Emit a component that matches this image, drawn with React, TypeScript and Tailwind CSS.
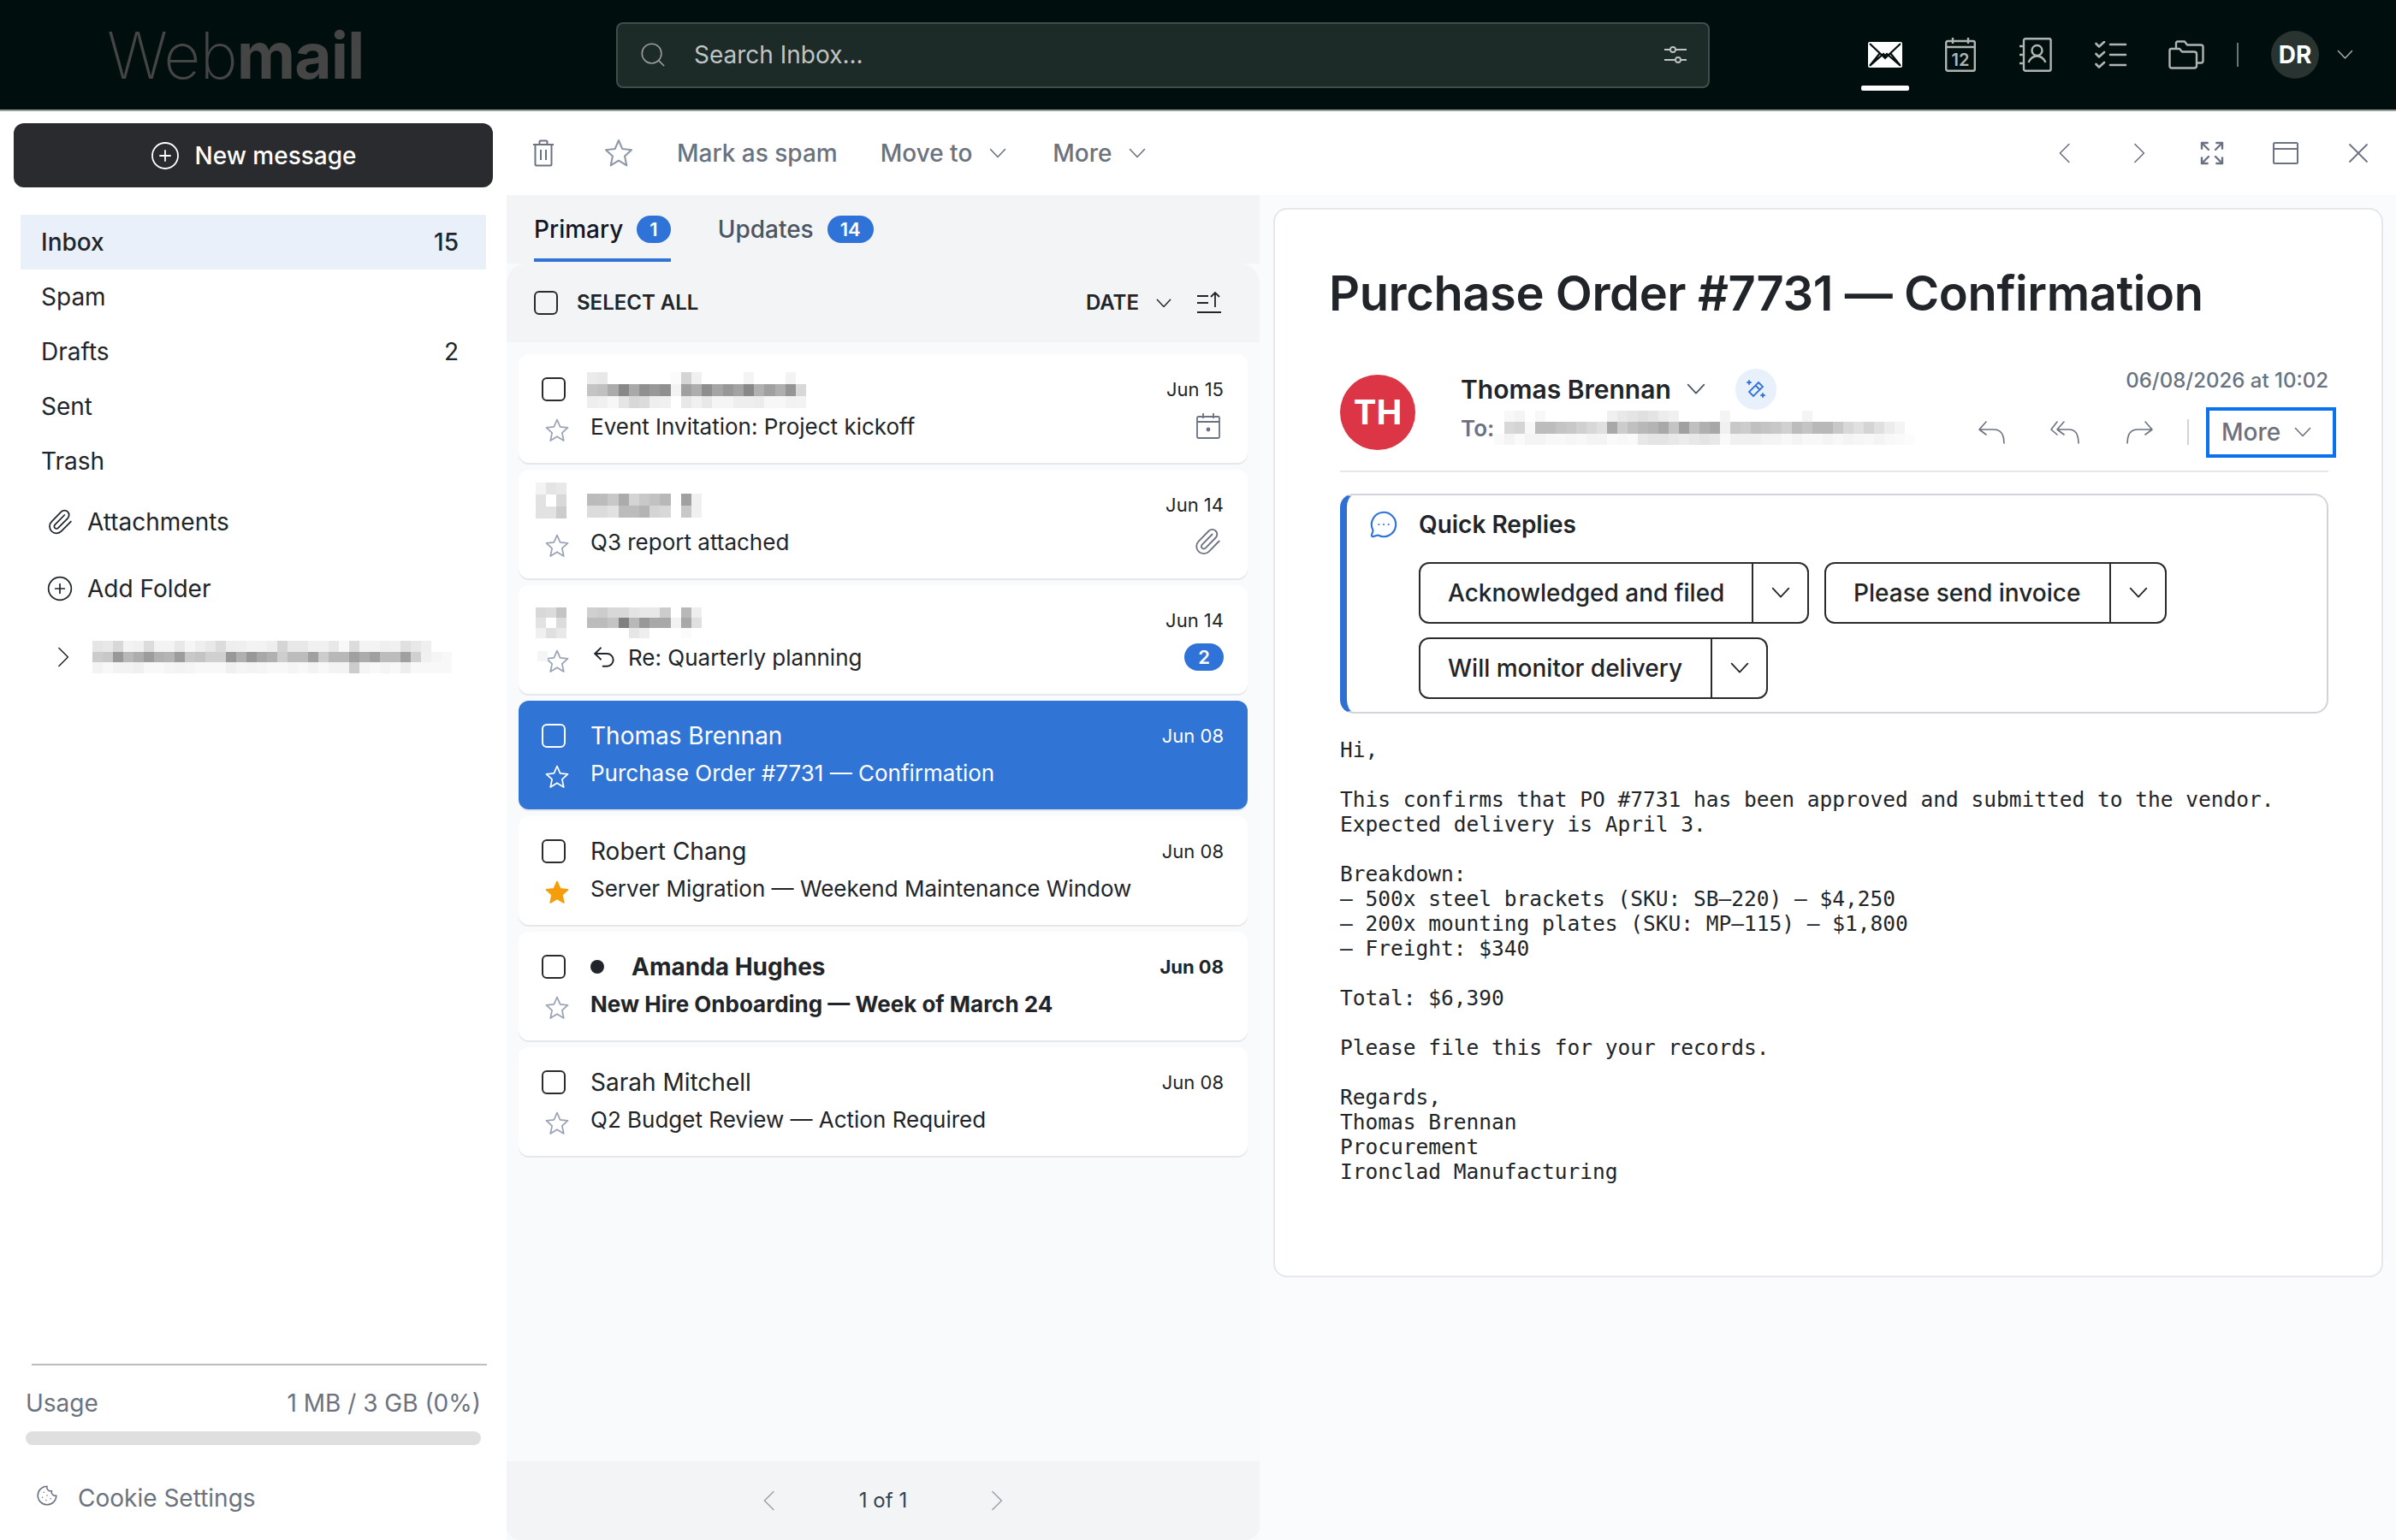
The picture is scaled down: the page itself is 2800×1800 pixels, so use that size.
import React from "react";
import { CirclePlus, Cookie, Expand, MessageCircleMore, Paperclip, Search, Undo2 } from "lucide-react";

// thin chevron used all over the page
function Chev({ dir = "down", w = 20, color = "#6b7280", sw = 1.6 }: { dir?: string; w?: number; color?: string; sw?: number }) {
  const d: Record<string, string> = {
    down: "M1.5 1.5 L10 10.5 L18.5 1.5",
    up: "M1.5 10.5 L10 1.5 L18.5 10.5",
  };
  if (dir === "left" || dir === "right") {
    return (
      <svg width={w * 0.7} height={w} viewBox="0 0 14 24" fill="none" stroke={color} strokeWidth={sw} strokeLinecap="round" strokeLinejoin="round">
        <path d={dir === "left" ? "M12.5 1.5 L2 12 L12.5 22.5" : "M1.5 1.5 L12 12 L1.5 22.5"} />
      </svg>
    );
  }
  return (
    <svg width={w} height={w * 0.6} viewBox="0 0 20 12" fill="none" stroke={color} strokeWidth={sw} strokeLinecap="round" strokeLinejoin="round">
      <path d={d[dir]} />
    </svg>
  );
}

function StarIcon({ color = "#9aa3b5", fill = "none", size = 30 }: { color?: string; fill?: string; size?: number }) {
  return (
    <svg width={size} height={size} viewBox="0 0 24 24" fill={fill} stroke={color} strokeWidth="1.4" strokeLinejoin="round">
      <path d="M12 2 L14.9 8.7 L22 9.5 L16.7 14.3 L18.2 21.6 L12 17.8 L5.8 21.6 L7.3 14.3 L2 9.5 L9.1 8.7 Z" />
    </svg>
  );
}

function Trash() {
  return (
    <svg width="28" height="32" viewBox="0 0 28 32" fill="none" stroke="#6b7280" strokeWidth="2">
      <path d="M2 6 H26 M9.5 6 V2.5 Q9.5 1.5 10.5 1.5 H17.5 Q18.5 1.5 18.5 2.5 V6" />
      <path d="M4.5 6 V29 Q4.5 30.5 6 30.5 H22 Q23.5 30.5 23.5 29 V6" />
      <path d="M11 12 V24 M17 12 V24" />
    </svg>
  );
}

function Checkbox({ color = "#2b2b2d" }: { color?: string }) {
  return <div className="w-[28px] h-[28px] rounded-[6px] border-2 shrink-0" style={{ borderColor: color }} />;
}

// pixelated blocks that stand for the redacted names
function Mosaic({ rows, cw = 12.2, ch = 14 }: { rows: string[]; cw?: number; ch?: number }) {
  const parsed = rows.map((r) => r.split(" "));
  const cols = Math.max(...parsed.map((r) => r.length));
  return (
    <svg width={cols * cw} height={parsed.length * ch} shapeRendering="crispEdges" className="shrink-0">
      {parsed.map((r, y) =>
        r.map((c, x) => <rect key={x + "-" + y} x={x * cw} y={y * ch} width={cw + 0.5} height={ch} fill={"#" + c + c + c} />)
      )}
    </svg>
  );
}

const navItems = [
  { label: "Inbox", count: "15", active: true },
  { label: "Spam" },
  { label: "Drafts", count: "2" },
  { label: "Sent" },
  { label: "Trash" },
];

function Header() {
  return (
    <header className="h-[130px] shrink-0 bg-[#000f0d] border-b-2 border-[#9a9e9b] flex items-center">
      <div className="w-[720px] pl-[125px] shrink-0 text-[#454545] text-[75px] leading-none tracking-[-1px] font-extralight">
        Web<span className="font-bold">mail</span>
      </div>
      <div className="w-[1278px] h-[77px] shrink-0 rounded-[8px] bg-[#1c2a28] border-2 border-[#3f4d4b] flex items-center pl-[24px] pr-[24px]">
        <Search size={34} strokeWidth={1.1} color="#9a9f9d" className="shrink-0" />
        <span className="ml-[31px] text-[28px] text-[#c0c4c2]">Search Inbox...</span>
        <svg width="28" height="24" viewBox="0 0 28 24" fill="none" stroke="#c0c4c2" strokeWidth="1.8" className="ml-auto">
          <path d="M1 6 H8 M14 6 H27 M1 18 H14 M20 18 H27" />
          <circle cx="11" cy="6" r="3" />
          <circle cx="17" cy="18" r="3" />
        </svg>
      </div>
      <div className="ml-[177px] flex items-center h-full">
        <div className="relative w-[56px] h-[56px] flex items-center justify-center">
          <svg width="40" height="30" viewBox="0 0 40 30">
            <rect x="0" y="0" width="40" height="30" rx="2" fill="#ffffff" />
            <path d="M2 2 L20 19 L38 2 M2 28 L14 13 M38 28 L26 13 M2 28 L18 14 L20 16 L22 14 L38 28" fill="none" stroke="#000f0d" strokeWidth="2.2" />
          </svg>
          <div className="absolute left-0 top-[64px] w-[56px] h-[6px] rounded-[2px] bg-white" />
        </div>
        <div className="w-[56px] h-[56px] ml-[32px] flex items-center justify-center">
          <svg width="36" height="40" viewBox="0 0 36 40" fill="none" stroke="#b0b4b2" strokeWidth="2.4">
            <rect x="1.2" y="4" width="33.6" height="34.8" rx="2" />
            <path d="M1 11 H35 M9 0 V7 M27 0 V7" />
            <text x="18" y="33" textAnchor="middle" fontSize="20" fontWeight="600" fill="#b0b4b2" stroke="none">12</text>
          </svg>
        </div>
        <div className="w-[56px] h-[56px] ml-[32px] flex items-center justify-center">
          <svg width="38" height="40" viewBox="0 0 38 40" fill="none" stroke="#b0b4b2" strokeWidth="2.4">
            <rect x="5" y="1.2" width="31.6" height="37.6" rx="2" />
            <path d="M0 10 H5 M0 20 H5 M0 30 H5" />
            <circle cx="20.5" cy="15" r="6" />
            <path d="M10.5 29 Q14 21.5 20.5 21.5 Q27 21.5 30.5 29" />
          </svg>
        </div>
        <div className="w-[56px] h-[56px] ml-[32px] flex items-center justify-center">
          <svg width="38" height="32" viewBox="0 0 38 32" fill="none" stroke="#b0b4b2" strokeWidth="2.6" strokeLinecap="round" strokeLinejoin="round">
            <path d="M1.5 3 L5 6.5 L11 1 M1.5 15 L5 18.5 L11 13 M1.5 27 L5 30.5 L11 25" />
            <path d="M18 4 H36 M18 16 H36 M18 28 H36" />
          </svg>
        </div>
        <div className="w-[56px] h-[56px] ml-[32px] flex items-center justify-center">
          <svg width="42" height="34" viewBox="0 0 42 34" fill="none" stroke="#b0b4b2" strokeWidth="2.4" strokeLinejoin="round">
            <path d="M1.5 12 Q1.5 10 3.5 10 H13 L16 13.5 H30 Q33 13.5 33 16 V30 Q33 32.5 30 32.5 H4 Q1.5 32.5 1.5 30 Z" />
            <path d="M9 10 V3.5 Q9 1.5 11 1.5 H19 L22 5.5 H38 Q40.5 5.5 40.5 8 V24 Q40.5 26.5 38 26.5 H33" />
          </svg>
        </div>
        <div className="w-[2px] h-[28px] bg-[#6d7472] ml-[31px]" />
        <div className="w-[56px] h-[56px] ml-[38px] rounded-full bg-[#29332f] flex items-center justify-center text-white text-[28px] font-bold">DR</div>
        <div className="ml-[21px]">
          <Chev w={19} color="#b0b4b2" sw={1.4} />
        </div>
      </div>
    </header>
  );
}

function Sidebar() {
  return (
    <aside className="w-[592px] shrink-0 flex flex-col bg-white">
      <div className="mt-[14px] ml-[16px] w-[560px] h-[75px] rounded-[12px] bg-[#2a2b2e] text-white flex items-center justify-center gap-[16px] text-[28px] font-medium">
        <CirclePlus size={36} strokeWidth={1.2} />
        <span>New message</span>
      </div>
      <nav className="mt-[32px] mx-[24px]">
        {navItems.map((n) => (
          <div key={n.label} className={"h-[64px] flex items-center justify-between pl-[24px] pr-[32px] text-[28px] text-[#212529] " + (n.active ? "bg-[#e9f0fa] font-medium" : "")}>
            <span>{n.label}</span>
            {n.count && <span>{n.count}</span>}
          </div>
        ))}
      </nav>
      <div className="mt-[7px] ml-[54px] h-[64px] flex items-center gap-[16px] text-[28px] text-[#212529]">
        <Paperclip size={32} strokeWidth={1.3} className="shrink-0" />
        <span>Attachments</span>
      </div>
      <div className="mt-[14px] ml-[54px] h-[64px] flex items-center gap-[16px] text-[28px] text-[#212529]">
        <CirclePlus size={32} strokeWidth={1.3} className="shrink-0" />
        <span>Add Folder</span>
      </div>
      <div className="mt-[16px] ml-[66px] h-[64px] flex items-center gap-[25px]">
        <Chev dir="right" w={24} color="#212529" sw={1.5} />
        <Mosaic
          cw={12}
          ch={12.7}
          rows={[
            "e5 e8 d8 f3 f0 dc f3 f3 e8 f5 ee e8 dc ee ef f3 f2 ee d5 e8 e8 f0 f0 e8 f8 dc f3 f3 ef f0 e0 e8 ef ff ff",
            "cc c8 98 b8 ad 9c b0 b4 9c c8 c4 d0 d0 98 b0 98 a8 b0 ce bc bc a0 cc b8 b8 a0 ac a0 bc bc a0 d0 f0 f5 f8",
            "f3 f8 f3 f3 f0 f8 f8 f5 f3 f5 f8 f8 f8 f0 f5 f3 f5 f8 f8 f5 f8 f3 f8 f3 f3 cc f5 f8 f5 f8 ee f8 f8 f8 f8",
          ]}
        />
      </div>
      <div className="mt-auto">
        <div className="ml-[37px] mr-[23px] h-[2px] bg-[#bcc0bd]" />
        <div className="mt-[27px] mx-[30px] flex justify-between text-[28px] leading-[34px] text-[#6b7280]">
          <span>Usage</span>
          <span>1 MB / 3 GB (0%)</span>
        </div>
        <div className="mt-[16px] mx-[30px] h-[16px] rounded-full bg-[#dfdfdf]" />
        <div className="mt-[45px] mb-[32px] ml-[42px] flex items-center gap-[23px] text-[28px] leading-[34px] text-[#6b7280]">
          <Cookie size={26} strokeWidth={1.4} className="-mt-[6px]" />
          <span>Cookie Settings</span>
        </div>
      </div>
    </aside>
  );
}

function Toolbar() {
  return (
    <div className="h-[97px] mb-[1px] shrink-0 flex items-center bg-white text-[28px] font-medium text-[#6b7280]">
      <div className="ml-[29px]">
        <Trash />
      </div>
      <div className="ml-[56px]">
        <StarIcon size={36} color="#8f98a8" />
      </div>
      <span className="ml-[50px]">Mark as spam</span>
      <span className="ml-[50px]">Move to</span>
      <div className="ml-[20px]">
        <Chev />
      </div>
      <span className="ml-[54px]">More</span>
      <div className="ml-[19px]">
        <Chev />
      </div>
      <div className="ml-auto flex items-center">
        <Chev dir="left" w={24} />
        <div className="ml-[71px]">
          <Chev dir="right" w={24} />
        </div>
        <Expand size={32} strokeWidth={1.8} className="ml-[60px]" />
        <svg width="30" height="26" viewBox="0 0 30 26" fill="none" stroke="#6b7280" strokeWidth="2" className="ml-[55px]">
          <rect x="1" y="1" width="28" height="24" rx="1.5" />
          <path d="M1 8 H29" />
        </svg>
        <svg width="24" height="24" viewBox="0 0 24 24" fill="none" stroke="#6b7280" strokeWidth="1.8" className="ml-[58px] mr-[32px]">
          <path d="M1.5 1.5 L22.5 22.5 M22.5 1.5 L1.5 22.5" />
        </svg>
      </div>
    </div>
  );
}

function Badge({ children }: { children: React.ReactNode }) {
  return <span className="h-[32px] px-[15px] rounded-full bg-[#2f73d8] text-white text-[22px] font-semibold leading-[32px]">{children}</span>;
}

type Msg = {
  sender?: string;
  mosaic?: string[];
  mosaicH?: number;
  avatar?: string[];
  avatarH?: number;
  subject: string;
  date: string;
  selected?: boolean;
  starred?: boolean;
  unread?: boolean;
  reply?: boolean;
  right?: React.ReactNode;
};

const messages: Msg[] = [
  {
    mosaic: [
      "eb e8 ff ff ff ff ff ff fb d4 f0 ff ff ff ff f4 ff ff ff f3 ff",
      "c4 c0 ab 88 a9 90 98 90 f3 a0 ae 8e a5 98 a3 88 b0 a0 ae 95 d8",
      "ee f0 f7 e5 d8 dc ee f0 ff e8 f1 e8 f5 f5 ee ee ec f7 f7 f2 f3",
    ],
    subject: "Event Invitation: Project kickoff",
    date: "Jun 15",
    right: (
      <svg width="28" height="30" viewBox="0 0 28 30" fill="none" stroke="#6b7280" strokeWidth="1.8" className="mr-[4px]">
        <rect x="1" y="4" width="26" height="25" rx="1.5" />
        <path d="M1 10 H27 M8 0 V6 M20 0 V6" />
        <circle cx="14" cy="19" r="1.5" fill="#6b7280" />
      </svg>
    ),
  },
  {
    avatar: ["f3 e4 e8", "e2 ff d8", "e2 e2 cc"],
    avatarH: 14,
    mosaic: ["bb bc c8 ab d4 c8 c2 b8 ff a0 f0", "dc dc e2 bc bc b4 d4 d8 ff c8 f0"],
    subject: "Q3 report attached",
    date: "Jun 14",
    right: <Paperclip size={34} strokeWidth={1.3} color="#6b7280" className="mr-[2px]" />,
  },
  {
    avatar: ["d8 dc c4", "e2 ff dc", "f0 e0 e8"],
    avatarH: 12,
    mosaic: ["d0 cc d8 d8 e4 e8 e8 cc ff b8 ee", "bc bc c4 80 b8 98 a8 a8 f2 a8 e0", "ff ff ff ff e6 ee ff ff ff fb ff"],
    mosaicH: 12,
    subject: "Re: Quarterly planning",
    date: "Jun 14",
    reply: true,
    right: <div className="h-[32px] w-[46px] rounded-full bg-[#2f73d8] text-white text-[22px] font-semibold text-center leading-[32px]">2</div>,
  },
  { sender: "Thomas Brennan", subject: "Purchase Order #7731 — Confirmation", date: "Jun 08", selected: true },
  { sender: "Robert Chang", subject: "Server Migration — Weekend Maintenance Window", date: "Jun 08", starred: true },
  { sender: "Amanda Hughes", subject: "New Hire Onboarding — Week of March 24", date: "Jun 08", unread: true },
  { sender: "Sarah Mitchell", subject: "Q2 Budget Review — Action Required", date: "Jun 08" },
];

function MessageCard({ m }: { m: Msg }) {
  const text = m.selected ? "text-white" : "text-[#212529]";
  return (
    <div className={"relative h-[127px] rounded-[12px] pl-[27px] pr-[28px] shadow-[0_2px_0_#e5e7eb] " + (m.selected ? "bg-[#3074d6]" : "bg-white")}>
      {m.reply && <div className="absolute left-[22px] top-[77px] w-[12px] h-[12px] bg-[#f4f5f7]" />}
      <div className="h-[80px] pt-[2px] flex items-center">
        <div className="w-[57px] shrink-0">
          {m.avatar ? (
            <div className={"-ml-[7px] " + (m.avatarH === 14 ? "-mt-[10px]" : "mt-[6px]")}>
              <Mosaic rows={m.avatar} cw={12} ch={m.avatarH} />
            </div>
          ) : (
            <Checkbox color={m.selected ? "#ffffff" : "#2b2b2d"} />
          )}
        </div>
        {m.unread && <div className="w-[16px] h-[16px] rounded-full bg-[#212529] mr-[32px]" />}
        {m.mosaic ? (
          <div className={"-ml-[4px] " + (m.mosaicH ? "mt-[6px]" : "mt-[2px]")}>
            <Mosaic rows={m.mosaic} ch={m.mosaicH || 14} />
          </div>
        ) : (
          <span className={"text-[28px] " + text + (m.unread ? " font-bold" : "")}>{m.sender}</span>
        )}
        <span className={"ml-auto text-[22px] " + text + (m.unread ? " font-bold" : "")}>{m.date}</span>
      </div>
      <div className="h-[40px] -mt-[16px] flex items-center">
        <div className="w-[57px] shrink-0 pl-[3px] pt-[10px]">
          {m.starred ? <StarIcon color="#f59e0b" fill="#f59e0b" /> : <StarIcon color={m.selected ? "#ffffff" : "#9aa3b5"} />}
        </div>
        {m.reply && <Undo2 size={32} strokeWidth={1.5} color="#212529" className="mr-[12px] shrink-0" />}
        <span className={"text-[26px] whitespace-nowrap " + text + (m.unread ? " font-bold text-[#111827]" : "")}>{m.subject}</span>
        <div className="ml-auto">{m.right}</div>
      </div>
    </div>
  );
}

function MessageList() {
  return (
    <div className="w-[880px] shrink-0 flex flex-col bg-[#f9fafb]">
      <div className="h-[80px] shrink-0 bg-[#f3f4f6] flex px-[32px] relative text-[28px] font-medium">
        <div className="flex items-center gap-[16px] h-[79px] relative">
          <span className="text-[#111827]">Primary</span>
          <Badge>1</Badge>
          <div className="absolute left-0 right-0 top-[74px] h-[4px] bg-[#2f73d8]" />
        </div>
        <div className="flex items-center gap-[16px] h-[79px] ml-[55px]">
          <span className="text-[#4b5563]">Updates</span>
          <Badge>14</Badge>
        </div>
      </div>
      <div className="h-[92px] shrink-0 bg-[#f3f4f6] rounded-t-[24px] flex items-center pl-[32px] pr-[45px] text-[24px] font-semibold text-[#212529]">
        <Checkbox />
        <span className="ml-[22px]">SELECT ALL</span>
        <span className="ml-auto">DATE</span>
        <div className="ml-[20px]">
          <Chev w={18} color="#212529" />
        </div>
        <svg width="28" height="26" viewBox="0 0 28 26" fill="none" stroke="#212529" strokeWidth="1.8" className="ml-[30px]">
          <path d="M0 5 H13 M0 13 H13 M0 24 H28 M21 18 V1 M16 6 L21 1 L26 6" />
        </svg>
      </div>
      <div className="flex-1 flex flex-col gap-[8px] px-[14px] pt-[14px]">
        {messages.map((m) => (
          <MessageCard key={m.subject} m={m} />
        ))}
      </div>
      <div className="h-[92px] shrink-0 bg-[#f3f4f6] rounded-b-[16px] flex items-center justify-center text-[24px] text-[#374151]">
        <Chev dir="left" w={24} color="#9ca3af" />
        <span className="mx-[97px]">1 of 1</span>
        <Chev dir="right" w={24} color="#9ca3af" />
      </div>
    </div>
  );
}

function SplitBtn({ label, main }: { label: string; main: string }) {
  return (
    <div className="h-[72px] flex rounded-[12px] border-2 border-[#2b2b2d] text-[28px] font-medium text-[#212529]">
      <div className={"flex items-center pl-[32px] border-r-2 border-[#2b2b2d] " + main}>{label}</div>
      <div className="w-[63px] flex items-center justify-center">
        <Chev w={22} color="#212529" />
      </div>
    </div>
  );
}

const body = `Hi,

This confirms that PO #7731 has been approved and submitted to the vendor.
Expected delivery is April 3.

Breakdown:
– 500x steel brackets (SKU: SB–220) – $4,250
– 200x mounting plates (SKU: MP–115) – $1,800
– Freight: $340

Total: $6,390

Please file this for your records.

Regards,
Thomas Brennan
Procurement
Ironclad Manufacturing`;

function ReadingPane() {
  return (
    <div className="flex-1 bg-[#fafbfc] pl-[16px] pr-[15px] pt-[15px]">
      <div className="h-[1250px] rounded-[16px] border-2 border-[#e5e7eb] bg-white pl-[76px] pr-[62px]">
        <h1 className="pt-[62px] ml-[-13px] text-[56px] leading-[72px] font-semibold tracking-[-0.4px] text-[#212529]">Purchase Order #7731 — Confirmation</h1>
        <div className="mt-[61px] h-[112px] flex border-b-2 border-[#e5e7eb]">
          <div className="w-[88px] h-[88px] mt-[-2px] rounded-full bg-[#dc3545] text-white text-[40px] font-bold flex items-center justify-center shrink-0">TH</div>
          <div className="ml-[53px] flex-1 min-w-0">
            <div className="flex items-center h-[48px] -mt-[9px]">
              <span className="text-[30px] font-semibold text-[#212529]">Thomas Brennan</span>
              <div className="ml-[18px]">
                <Chev w={22} color="#4b5563" />
              </div>
              <div className="ml-[35px] w-[48px] h-[48px] rounded-full bg-[#e8f0fb] flex items-center justify-center">
                <svg width="26" height="26" viewBox="0 0 26 26" fill="none" stroke="#2f73d8" strokeWidth="1.8" strokeLinecap="round">
                  <path d="M16 5 L21 10 L10 21 L5 16 Z M12.5 8.5 L17.5 13.5" />
                  <path d="M5 3 V7 M3 5 H7 M21 18 V22 M19 20 H23" />
                </svg>
              </div>
              <span className="ml-auto -mt-[20px] text-[24px] font-medium text-[#6b7280]">06/08/2026 at 10:02</span>
            </div>
            <div className="flex items-center h-[60px] -mt-[4px]">
              <span className="-mt-[10px] text-[26px] font-semibold text-[#6b7280]">To:</span>
              <div className="-mt-[10px]">
                <Mosaic
                  cw={12}
                  ch={13.4}
                  rows={[
                    "ff f8 f4 ff f8 ff ff ff ff ff ff f0 e8 e4 e0 e4 ec f0 ff ff ff ff f4 ff ff ff ff ff ff ff f4 ff ff ff ff ff ff ff ff ff ff",
                    "ff d8 d4 f8 bc bc c4 c8 d0 d8 e0 a8 cc c0 b8 b4 a8 c4 a0 c0 b0 a8 f0 c8 cc c0 c4 c8 d0 bc c4 b8 b8 c8 d8 e0 d4 e0 ec f4 ff",
                    "fa f4 fa f4 f4 f8 f8 f6 f8 f4 f4 fa f8 fa e8 e4 e4 e8 ec e8 e4 e8 fa f0 f0 f0 f4 f4 f8 f4 f8 f8 f4 f8 f4 f6 f8 f4 f8 fa fc",
                  ]}
                />
              </div>
              <div className="ml-auto flex items-center">
                <svg width="36" height="36" viewBox="0 0 36 36" fill="none" stroke="#6b7280" strokeWidth="1.6" strokeLinecap="round" strokeLinejoin="round">
                  <path d="M11 6 L3 15 L11 21 M3 15 H20 Q32 15 32 31" />
                </svg>
                <svg width="40" height="36" viewBox="0 0 40 36" fill="none" stroke="#6b7280" strokeWidth="1.6" strokeLinecap="round" strokeLinejoin="round" className="ml-[48px]">
                  <path d="M10 6 L3 15 L10 21 M18 6 L10 15 L18 21 M10 15 H24 Q35 15 35 31" />
                </svg>
                <svg width="36" height="36" viewBox="0 0 36 36" fill="none" stroke="#6b7280" strokeWidth="1.6" strokeLinecap="round" strokeLinejoin="round" className="ml-[48px]">
                  <path d="M25 6 L33 15 L25 21 M33 15 H16 Q4 15 4 31" />
                </svg>
                <div className="ml-[38px] w-[2px] h-[30px] bg-[#d1d5db]" />
                <div className="ml-[20px] -mr-[9px] w-[152px] h-[59px] border-[4px] border-[#0b72ef] flex items-center pl-[14px] text-[28px] font-medium text-[#6b7280]">
                  <span>More</span>
                  <div className="ml-[16px]">
                    <Chev w={20} />
                  </div>
                </div>
              </div>
            </div>
          </div>
        </div>
        <div className="mt-[25px] h-[257px] rounded-[16px] border-2 border-[#d1d5db] border-l-[8px] border-l-[#2f6fd3]">
          <div className="h-[68px] flex items-center pl-[26px] text-[28px] font-semibold text-[#212529]">
            <MessageCircleMore size={34} strokeWidth={1.5} color="#2f73d8" />
            <span className="ml-[24px]">Quick Replies</span>
          </div>
          <div className="mt-[10px] pl-[84px] flex flex-wrap gap-x-[18px] gap-y-[16px] w-[980px]">
            <SplitBtn label="Acknowledged and filed" main="w-[389px]" />
            <SplitBtn label="Please send invoice" main="w-[333px]" />
            <SplitBtn label="Will monitor delivery" main="w-[341px]" />
          </div>
        </div>
        <pre className="mt-[28px] font-['DejaVu_Sans_Mono',monospace] text-[24.5px] leading-[29px] text-[#212529]">{body}</pre>
      </div>
    </div>
  );
}

export default function App() {
  return (
    <div className="w-[2800px] h-[1800px] flex flex-col overflow-hidden bg-white font-['Inter',sans-serif]">
      <Header />
      <div className="flex-1 flex min-h-0">
        <Sidebar />
        <main className="flex-1 flex flex-col min-w-0">
          <Toolbar />
          <div className="flex-1 flex min-h-0">
            <MessageList />
            <ReadingPane />
          </div>
        </main>
      </div>
    </div>
  );
}
